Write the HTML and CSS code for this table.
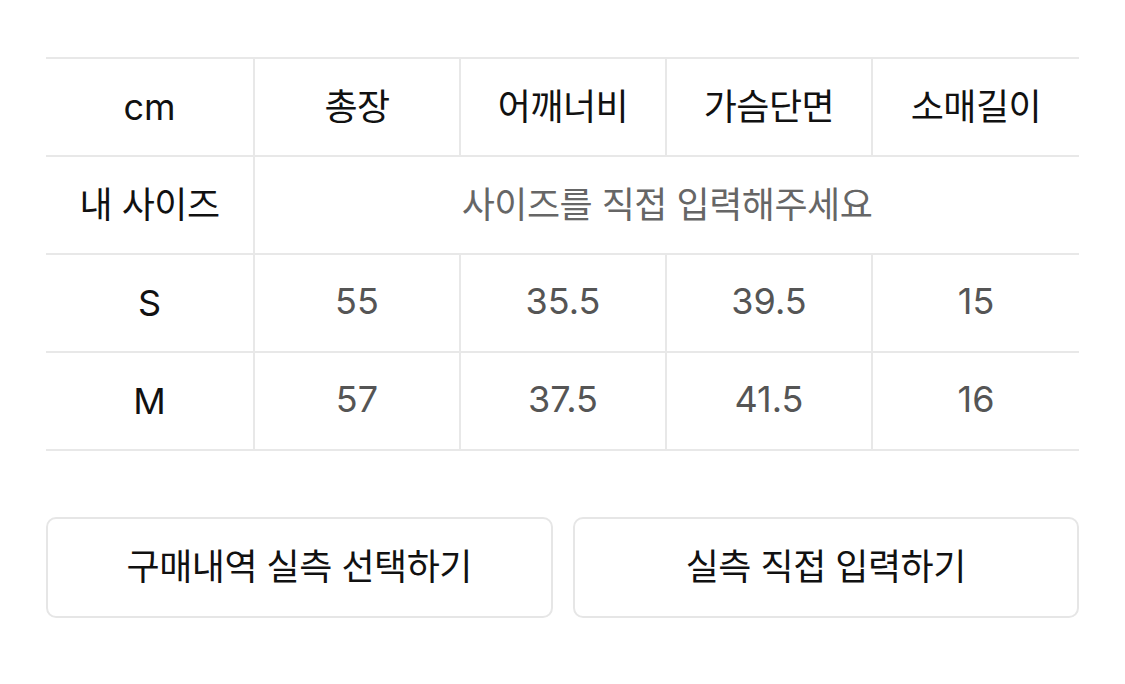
FILE: index.html
```html
<!DOCTYPE html>
<html lang="ko">
<head>
<meta charset="utf-8">
<title>사이즈</title>
<link rel="stylesheet" href="styles.css">
</head>
<body>
<div class="page">
  <div class="size-table">
    <div class="cell head">cm</div>
    <div class="cell head ko">총장</div>
    <div class="cell head ko">어깨너비</div>
    <div class="cell head ko">가슴단면</div>
    <div class="cell head ko last">소매길이</div>

    <div class="cell head ko">내 사이즈</div>
    <div class="cell hint ko span4 last">사이즈를 직접 입력해주세요</div>

    <div class="cell head">S</div>
    <div class="cell num">55</div>
    <div class="cell num">35.5</div>
    <div class="cell num">39.5</div>
    <div class="cell num last">15</div>

    <div class="cell head">M</div>
    <div class="cell num">57</div>
    <div class="cell num">37.5</div>
    <div class="cell num">41.5</div>
    <div class="cell num last">16</div>
  </div>

  <div class="actions">
    <button class="btn ko" type="button">구매내역 실측 선택하기</button>
    <button class="btn ko" type="button">실측 직접 입력하기</button>
  </div>
</div>
</body>
</html>
```

FILE: styles.css
```css
html, body {
  margin: 0;
  padding: 0;
  background: #ffffff;
}

body {
  font-family: "Inter", "Noto Sans CJK KR", sans-serif;
  color: #111111;
}

.page {
  width: 1033px;
  margin-left: 46px;
  padding-top: 57px;
}

.size-table {
  display: grid;
  grid-template-columns: 209px repeat(4, 1fr);
  grid-auto-rows: 98px;
  border-top: 2px solid #e8e8e8;
}

.cell {
  box-sizing: border-box;
  display: flex;
  align-items: center;
  justify-content: center;
  border-bottom: 2px solid #e8e8e8;
  border-right: 2px solid #e8e8e8;
  font-size: 36px;
  line-height: 1;
}

.cell.last {
  border-right: none;
}

.span4 {
  grid-column: span 4;
}

.ko {
  letter-spacing: -0.5px;
}

.head {
  color: #111111;
  font-weight: 400;
}

.num {
  color: #555555;
  font-weight: 400;
  padding-bottom: 4px;
}

.hint {
  color: #666666;
  font-weight: 400;
}

.actions {
  display: flex;
  gap: 20px;
  margin-top: 66px;
}

.btn {
  flex: 1;
  height: 101px;
  box-sizing: border-box;
  background: #ffffff;
  border: 2px solid #e6e6e6;
  border-radius: 10px;
  font-family: "Noto Sans CJK KR", sans-serif;
  font-size: 36px;
  font-weight: 400;
  color: #111111;
  padding: 0 0 7px 0;
  cursor: pointer;
}
```
